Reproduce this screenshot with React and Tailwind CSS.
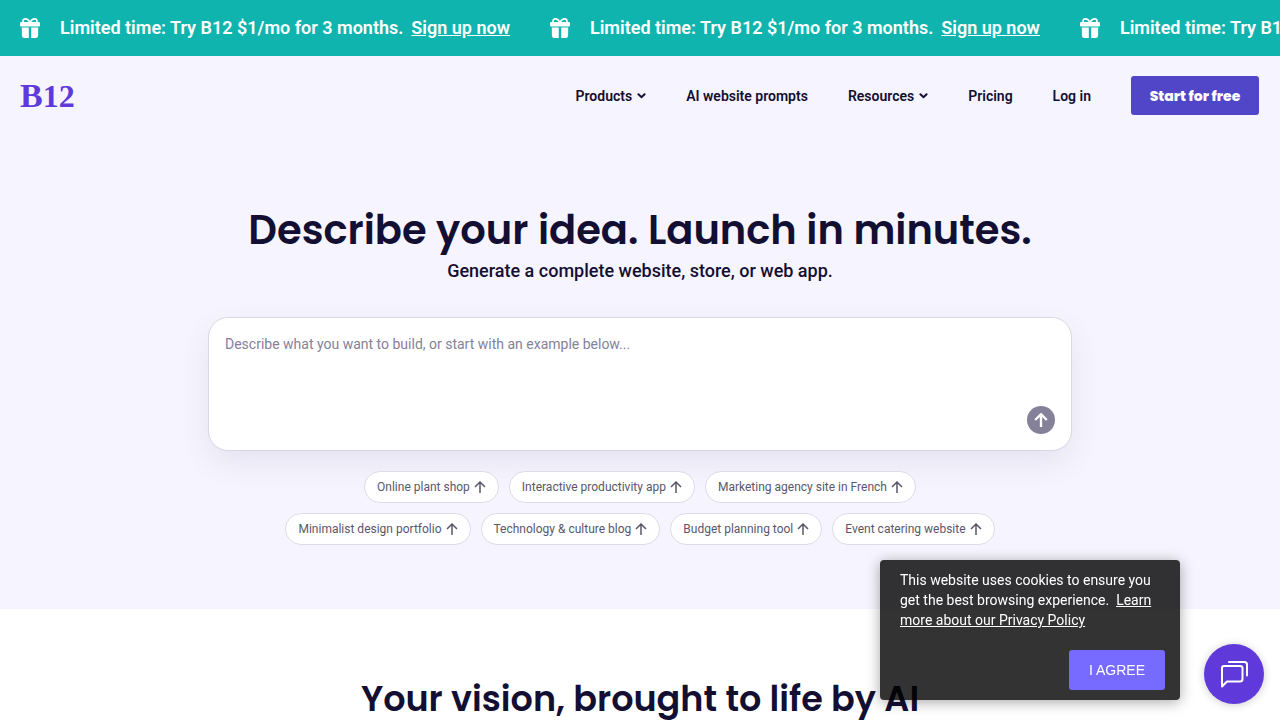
// src/App.jsx

const NAV_ITEMS = [
  { label: "Products", menu: true },
  { label: "AI website prompts" },
  { label: "Resources", menu: true },
  { label: "Pricing" },
  { label: "Log in" },
];

const EXAMPLE_ROWS = [
  ["Online plant shop", "Interactive productivity app", "Marketing agency site in French"],
  [
    "Minimalist design portfolio",
    "Technology & culture blog",
    "Budget planning tool",
    "Event catering website",
  ],
];

function GiftIcon() {
  return (
    <svg viewBox="0 0 20 20" className="h-5 w-5 shrink-0" fill="currentColor" aria-hidden="true">
      <path
        d="M9.8 4.6C8.8 2 7.2.8 5.4.8 3.9.8 3 1.7 3 3.1c0 .7.2 1.2.5 1.7M10.2 4.6C11.2 2 12.8.8 14.6.8 16.1.8 17 1.7 17 3.1c0 .7-.2 1.2-.5 1.7"
        fill="none"
        stroke="currentColor"
        strokeWidth="1.7"
      />
      <path d="M1.2 4H18.8Q20 4 20 5.2V7.6Q20 8.4 19.2 8.4H.8Q0 8.4 0 7.6V5.2Q0 4 1.2 4Z" />
      <path d="M1.8 9.5H8.8V20H4.2Q2 20 1.9 17.8ZM11.2 9.5H18.2L18.1 17.8Q18 20 15.8 20H11.2Z" />
    </svg>
  );
}

function ChevronIcon() {
  return (
    <svg
      viewBox="0 0 9 9"
      className="h-[9px] w-[9px]"
      fill="none"
      stroke="currentColor"
      strokeWidth="2"
      strokeLinecap="round"
      aria-hidden="true"
    >
      <path d="M1.4 3.2 4.5 6.2 7.6 3.2" />
    </svg>
  );
}

function ArrowUpIcon({ className }) {
  return (
    <svg
      viewBox="0 0 12 12"
      className={className}
      fill="none"
      stroke="currentColor"
      aria-hidden="true"
    >
      <path d="M6 12V1.2M1 6 6 1 11 6" />
    </svg>
  );
}

function ChatIcon() {
  return (
    <svg
      viewBox="0 0 28 28"
      className="h-7 w-7"
      fill="none"
      stroke="currentColor"
      strokeWidth="2"
      strokeLinejoin="round"
      strokeLinecap="round"
      aria-hidden="true"
    >
      <path d="M2 26.5V8Q2 6 4 6H20Q22.5 6 22.5 8V19Q22.5 21.5 20 21.5H7Z" />
      <path d="M9 2H24.5Q27 2 27 4.5V15.5" />
    </svg>
  );
}

function PromoBar() {
  return (
    <div className="flex h-14 items-center gap-10 overflow-hidden bg-[#10b4ae] px-5 text-lg font-semibold whitespace-nowrap text-white">
      {[0, 1, 2].map((n) => (
        <div key={n} className="flex shrink-0 items-center">
          <GiftIcon />
          <span className="ml-5">Limited time: Try B12 $1/mo for 3 months.</span>
          <a href="#signup" className="ml-2 underline">
            Sign up now
          </a>
        </div>
      ))}
    </div>
  );
}

function Header() {
  return (
    <header className="flex items-center justify-between py-5 pr-[21px] pl-5">
      <a
        href="#home"
        className="font-['Liberation_Serif',serif] text-[34px] leading-9 font-bold text-[#6039db]"
      >
        B<span className="text-[32px]">12</span>
      </a>
      <nav className="flex items-center gap-10 text-sm font-semibold">
        {NAV_ITEMS.map((item) =>
          item.menu ? (
            <button key={item.label} type="button" className="flex items-center gap-[5px]">
              {item.label}
              <ChevronIcon />
            </button>
          ) : (
            <a key={item.label} href="#nav">
              {item.label}
            </a>
          )
        )}
        <button
          type="button"
          className="h-[39px] w-32 rounded-[3px] bg-[#5146c7] font-[Poppins,Inter,sans-serif] text-sm font-extrabold text-white"
        >
          Start for free
        </button>
      </nav>
    </header>
  );
}

function Hero() {
  return (
    <section className="flex flex-col items-center px-5 pt-[70px] pb-16">
      <h1 className="text-center font-[Poppins,Inter,sans-serif] text-[40px] leading-[50px] font-semibold">
        Describe your idea. Launch in minutes.
      </h1>
      <p className="text-lg leading-8 font-medium">
        Generate a complete website, store, or web app.
      </p>

      <form className="mt-[30px] flex w-full max-w-[864px] flex-col rounded-[20px] border border-[#d9d7e3] bg-white p-4 shadow-[0_12px_32px_rgba(19,15,51,0.07)]">
        <textarea
          rows={3}
          aria-label="Describe what you want to build"
          placeholder="Describe what you want to build, or start with an example below..."
          className="h-[72px] w-full resize-none text-sm leading-5 outline-none placeholder:text-[#858199]"
        />
        <button
          type="submit"
          aria-label="Build"
          className="flex h-7 w-7 items-center justify-center self-end rounded-full bg-[#858199] text-white"
        >
          <ArrowUpIcon className="h-3.5 w-3.5 stroke-2" />
        </button>
      </form>

      <div className="mt-5 flex flex-col gap-2.5 text-xs text-[#5a576b]">
        {EXAMPLE_ROWS.map((row) => (
          <div key={row[0]} className="flex flex-wrap justify-center gap-2.5">
            {row.map((label) => (
              <button
                key={label}
                type="button"
                className="flex h-8 items-center gap-1 rounded-full border border-[#dddbe6] bg-white px-3"
              >
                {label}
                <ArrowUpIcon className="h-3 w-3 stroke-[1.5]" />
              </button>
            ))}
          </div>
        ))}
      </div>
    </section>
  );
}

function CookieNotice() {
  return (
    <aside className="fixed right-[100px] bottom-5 flex w-[300px] flex-col rounded bg-black/80 pt-2.5 pr-[15px] pb-2.5 pl-5 text-sm leading-5 text-white shadow-[0_2px_14px_rgba(0,0,0,0.35)]">
      <p>
        This website uses cookies to ensure you get the best browsing experience.&nbsp;{" "}
        <a href="#privacy" className="underline">
          Learn more about our Privacy Policy
        </a>
      </p>
      <button
        type="button"
        className="mt-5 h-10 w-24 self-end rounded-[3px] bg-[#766aff] font-['Liberation_Sans',sans-serif] text-sm text-white"
      >
        I AGREE
      </button>
    </aside>
  );
}

export default function App() {
  return (
    <div className="min-h-screen bg-white font-[Roboto,sans-serif] text-[#130f33]">
      <div className="bg-[#f6f4fe]">
        <PromoBar />
        <Header />
        <Hero />
      </div>

      <section className="px-5 pt-16 pb-10">
        <h2 className="text-center font-[Poppins,Inter,sans-serif] text-[35px] leading-[52px] font-semibold">
          Your vision, brought to life by AI
        </h2>
      </section>

      <CookieNotice />
      <button
        type="button"
        aria-label="Open chat"
        className="fixed right-4 bottom-4 flex h-[60px] w-[60px] items-center justify-center rounded-full bg-[#6039db] text-white shadow-[0_1px_8px_rgba(0,0,0,0.2)]"
      >
        <ChatIcon />
      </button>
    </div>
  );
}
